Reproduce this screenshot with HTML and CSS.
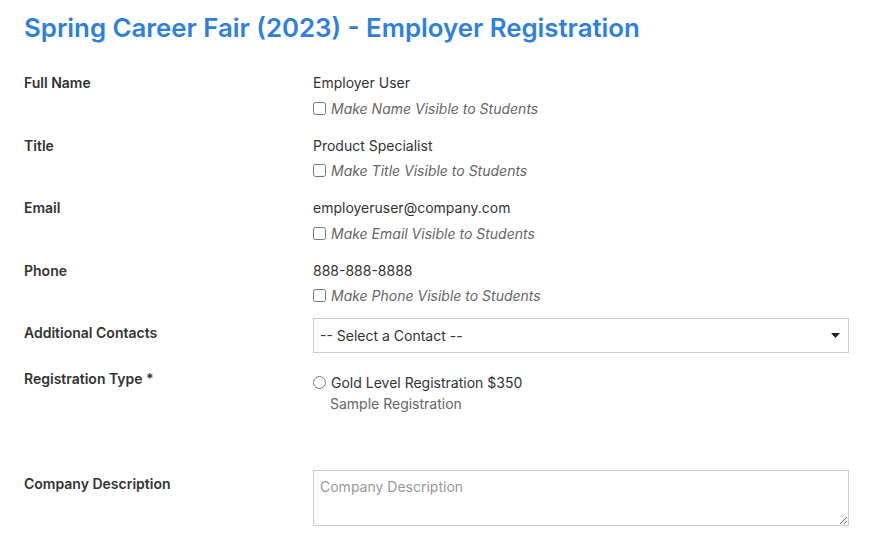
FILE: index.html
```html
<!DOCTYPE html>
<html lang="en">
<head>
<meta charset="utf-8">
<title>Employer Registration</title>
<link rel="stylesheet" href="styles.css">
</head>
<body>
<main class="page">
  <h1 class="title">Spring Career Fair (2023) - Employer Registration</h1>
  <form class="form">
    <div class="row row-info">
      <div class="label">Full Name</div>
      <div class="value">
        <div class="text">Employer User</div>
        <label class="check"><input type="checkbox"><span>Make Name Visible to Students</span></label>
      </div>
    </div>
    <div class="row row-info">
      <div class="label">Title</div>
      <div class="value">
        <div class="text">Product Specialist</div>
        <label class="check"><input type="checkbox"><span>Make Title Visible to Students</span></label>
      </div>
    </div>
    <div class="row row-info">
      <div class="label">Email</div>
      <div class="value">
        <div class="text">employeruser@company.com</div>
        <label class="check"><input type="checkbox"><span>Make Email Visible to Students</span></label>
      </div>
    </div>
    <div class="row row-info">
      <div class="label">Phone</div>
      <div class="value">
        <div class="text">888-888-8888</div>
        <label class="check"><input type="checkbox"><span>Make Phone Visible to Students</span></label>
      </div>
    </div>
    <div class="row row-select">
      <div class="label label-select">Additional Contacts</div>
      <div class="value">
        <div class="select">
          <span>-- Select a Contact --</span>
          <svg class="caret" width="9" height="5" viewBox="0 0 9 5"><path d="M0 0h9L4.5 5z" fill="#222"/></svg>
        </div>
      </div>
    </div>
    <div class="row row-reg">
      <div class="label">Registration Type *</div>
      <div class="value">
        <label class="radio"><input type="radio" name="reg"><span>Gold Level Registration $350</span></label>
        <div class="reg-desc">Sample Registration</div>
      </div>
    </div>
    <div class="row row-desc">
      <div class="label label-desc">Company Description</div>
      <div class="value">
        <textarea class="textarea" placeholder="Company Description"></textarea>
      </div>
    </div>
  </form>
</main>
</body>
</html>
```
FILE: styles.css
```css
* { box-sizing: border-box; }
html, body { margin: 0; padding: 0; background: #fff; }
body {
  font-family: Inter, "Noto Sans", "Liberation Sans", sans-serif;
  font-size: 14px;
  color: #333;
}
.page { padding: 12px 24px 0 24px; }
.title {
  margin: 0;
  font-size: 25.8px;
  line-height: 32px;
  font-weight: 600;
  color: #2f80dc;
}
.form { margin-top: 29px; }
.row {
  display: grid;
  grid-template-columns: 289px 536px;
}
.row-info { margin-bottom: 16.5px; }
.label {
  font-weight: 600;
  line-height: 20px;
  color: #333;
}
.text { line-height: 20px; }
.check {
  display: flex;
  align-items: center;
  margin-top: 4px;
  height: 22px;
  font-style: italic;
  color: #666;
}
.check input, .radio input {
  margin: 0 5px 0 0;
  width: 13px;
  height: 13px;
}
.row-select { margin-top: -5.5px; }
.label-select { padding-top: 5px; }
.select {
  height: 35px;
  border: 1px solid #ccc;
  display: flex;
  align-items: center;
  justify-content: space-between;
  padding: 0 8px 0 6px;
  color: #333;
}
.row-reg { margin-top: 16px; }
.radio {
  display: flex;
  align-items: center;
  margin-top: 4px;
  height: 20px;
  color: #333;
}
.reg-desc {
  padding-left: 17px;
  line-height: 22px;
  color: #666;
}
.row-desc { margin-top: 55px; }
.label-desc { padding-top: 4px; }
.textarea {
  display: block;
  width: 536px;
  height: 56px;
  border: 1px solid #ccc;
  border-radius: 0;
  padding: 6px 6px;
  font-family: inherit;
  font-size: 14px;
  line-height: 20px;
  color: #333;
  margin: 0;
}
.textarea::placeholder { color: #999; }
```
